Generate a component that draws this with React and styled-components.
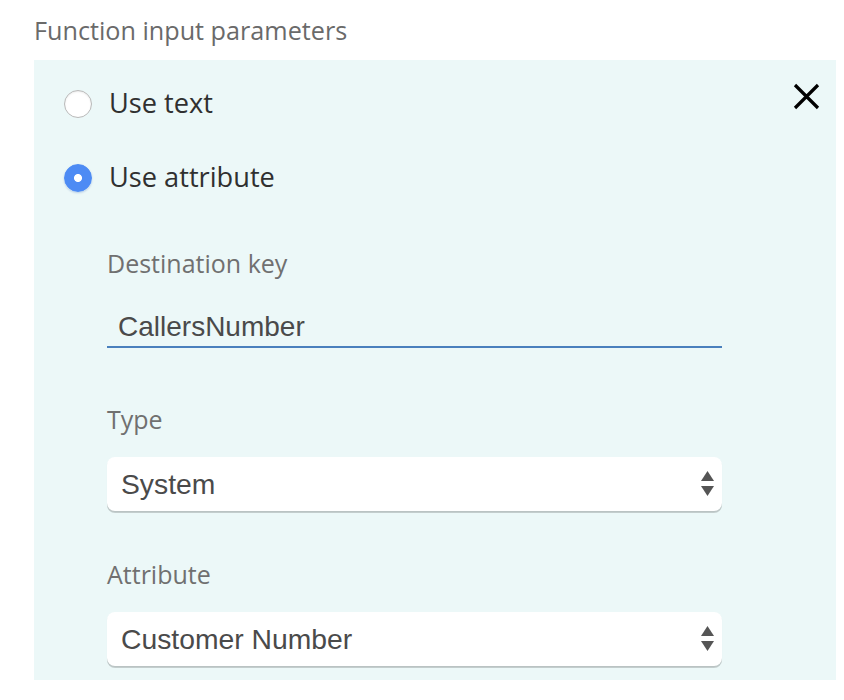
import React from "react";
import styled, { createGlobalStyle } from "styled-components";

const GlobalStyle = createGlobalStyle`
  html, body {
    margin: 0;
    padding: 0;
    background: #ffffff;
  }
  * {
    box-sizing: border-box;
  }
`;

const Page = styled.div`
  padding: 15px 8px 0 34px;
  font-family: "Open Sans", "DejaVu Sans", sans-serif;
`;

const Heading = styled.h3`
  margin: 0 0 15px;
  font-size: 25.2px;
  line-height: 30px;
  font-weight: 400;
  color: #6a6a6a;
`;

const Panel = styled.div`
  position: relative;
  width: 802px;
  background: #ecf8f8;
  padding: 24px 0 14px 30px;
`;

const CloseButton = styled.button`
  position: absolute;
  top: 22px;
  right: 15px;
  width: 29px;
  height: 29px;
  padding: 0;
  border: 0;
  background: transparent;
  display: flex;
  align-items: center;
  justify-content: center;
  cursor: pointer;
`;

const RadioRow = styled.label`
  display: flex;
  align-items: center;
  height: 40px;
  gap: 17px;
  margin-bottom: ${(p) => (p.$last ? "0" : "34px")};
  cursor: pointer;
`;

const Radio = styled.input`
  appearance: none;
  margin: 0;
  width: 28px;
  height: 28px;
  border-radius: 50%;
  flex-shrink: 0;
  background: #ffffff;
  border: 1px solid #b9b9b9;
  box-shadow: inset 0 1px 2px rgba(0, 0, 0, 0.08);

  &:checked {
    background: radial-gradient(circle, #ffffff 0 3.6px, #4d8bf4 4.4px);
    border-color: #4d8bf4;
    box-shadow: 0 1px 2px rgba(40, 90, 180, 0.25);
  }
`;

const RadioText = styled.span`
  font-size: 27.2px;
  line-height: 40px;
  color: #303030;
  padding-bottom: 2px;
`;

const Fields = styled.div`
  width: 615px;
  margin-left: 43px;
  padding-top: 50px;
  display: flex;
  flex-direction: column;
`;

const FieldLabel = styled.div`
  font-size: 25px;
  line-height: 30px;
  color: #707070;
  margin-bottom: ${(p) => p.$gap}px;
`;

const TextInput = styled.input`
  display: block;
  width: 100%;
  height: 38px;
  margin: 0 0 56px;
  padding: 0 0 2px 11px;
  border: 0;
  border-bottom: 2px solid #4a80bd;
  background: transparent;
  font-family: "Liberation Sans", Arial, sans-serif;
  font-size: 28px;
  line-height: 34px;
  color: #4a4a4a;
  outline: none;
`;

const SelectWrap = styled.div`
  position: relative;
  margin-bottom: ${(p) => p.$gap}px;
`;

const Select = styled.select`
  appearance: none;
  display: block;
  width: 100%;
  height: 54px;
  margin: 0;
  padding: 0 40px 0 14px;
  border: 0;
  border-radius: 8px;
  background: #ffffff;
  box-shadow: 0 2px 0 rgba(0, 0, 0, 0.17), 0 1px 1px rgba(0, 0, 0, 0.06);
  font-family: "Liberation Sans", Arial, sans-serif;
  font-size: 28.3px;
  color: #4a4a4a;
  outline: none;
`;

const Arrows = styled.svg`
  position: absolute;
  right: 8px;
  top: 14px;
  pointer-events: none;
`;

const SelectArrows = () => (
  <Arrows width="13" height="25" viewBox="0 0 13 25">
    <polygon points="6.5,0 13,10 0,10" fill="#555555" />
    <polygon points="0,15 13,15 6.5,25" fill="#555555" />
  </Arrows>
);

const CloseIcon = () => (
  <svg width="27" height="27" viewBox="0 0 27 27">
    <path
      d="M2 2 L25 25 M25 2 L2 25"
      stroke="#000000"
      strokeWidth="3.2"
      fill="none"
    />
  </svg>
);

const App = () => {
  return (
    <Page>
      <GlobalStyle />
      <Heading>Function input parameters</Heading>
      <Panel>
        <CloseButton type="button" aria-label="Close">
          <CloseIcon />
        </CloseButton>
        <RadioRow>
          <Radio type="radio" name="mode" value="text" />
          <RadioText>Use text</RadioText>
        </RadioRow>
        <RadioRow $last>
          <Radio type="radio" name="mode" value="attribute" defaultChecked />
          <RadioText>Use attribute</RadioText>
        </RadioRow>
        <Fields>
          <FieldLabel $gap={32}>Destination key</FieldLabel>
          <TextInput type="text" defaultValue="CallersNumber" />
          <FieldLabel $gap={23}>Type</FieldLabel>
          <SelectWrap $gap={48}>
            <Select defaultValue="system">
              <option value="system">System</option>
              <option value="user">User defined</option>
            </Select>
            <SelectArrows />
          </SelectWrap>
          <FieldLabel $gap={23}>Attribute</FieldLabel>
          <SelectWrap $gap={0}>
            <Select defaultValue="customer">
              <option value="customer">Customer Number</option>
              <option value="dialed">Dialed Number</option>
            </Select>
            <SelectArrows />
          </SelectWrap>
        </Fields>
      </Panel>
    </Page>
  );
};

export default App;
